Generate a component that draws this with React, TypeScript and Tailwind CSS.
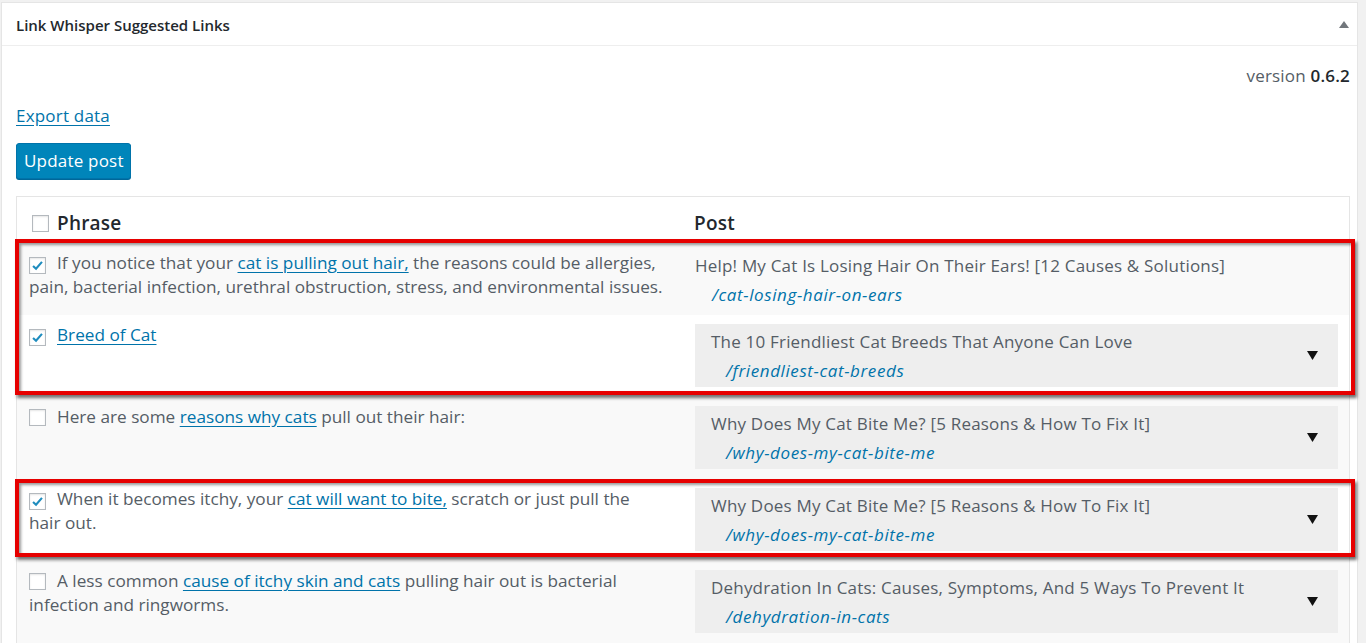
import React from 'react';

type Row = {
  checked: boolean;
  before: string;
  link: string;
  after: string;
  title: string;
  slug: string;
  select: boolean;
  striped: boolean;
};

// "\n" marks where the phrase wraps in the original layout
const rows: Row[] = [
  {
    checked: true,
    before: 'If you notice that your ',
    link: 'cat is pulling out hair,',
    after: ' the reasons could be allergies,\npain, bacterial infection, urethral obstruction, stress, and environmental issues.',
    title: 'Help! My Cat Is Losing Hair On Their Ears! [12 Causes & Solutions]',
    slug: '/cat-losing-hair-on-ears',
    select: false,
    striped: true,
  },
  {
    checked: true,
    before: '',
    link: 'Breed of Cat',
    after: '',
    title: 'The 10 Friendliest Cat Breeds That Anyone Can Love',
    slug: '/friendliest-cat-breeds',
    select: true,
    striped: false,
  },
  {
    checked: false,
    before: 'Here are some ',
    link: 'reasons why cats',
    after: ' pull out their hair:',
    title: 'Why Does My Cat Bite Me? [5 Reasons & How To Fix It]',
    slug: '/why-does-my-cat-bite-me',
    select: true,
    striped: true,
  },
  {
    checked: true,
    before: 'When it becomes itchy, your ',
    link: 'cat will want to bite,',
    after: ' scratch or just pull the\nhair out.',
    title: 'Why Does My Cat Bite Me? [5 Reasons & How To Fix It]',
    slug: '/why-does-my-cat-bite-me',
    select: true,
    striped: false,
  },
  {
    checked: false,
    before: 'A less common ',
    link: 'cause of itchy skin and cats',
    after: ' pulling hair out is bacterial\ninfection and ringworms.',
    title: 'Dehydration In Cats: Causes, Symptoms, And 5 Ways To Prevent It',
    slug: '/dehydration-in-cats',
    select: true,
    striped: true,
  },
];

const Checkbox = ({ checked }: { checked?: boolean }) => (
  <span className="mr-[11px] inline-flex h-[17px] w-[17px] items-center justify-center border border-[#b4b9be] bg-white align-[-3px] shadow-[inset_0_1px_2px_rgba(0,0,0,0.1)]">
    {checked && (
      <svg width="13" height="13" viewBox="0 0 16 16">
        <path d="M2.5 8.5 L6.2 12 L13.5 3.5" fill="none" stroke="#1e8cbe" strokeWidth="2.6" />
      </svg>
    )}
  </span>
);

// red annotation frame drawn over a group of rows
const Highlight = ({ top, bottom }: { top: string; bottom: string }) => (
  <span
    className={`pointer-events-none absolute -left-[2px] -right-[6px] border-4 border-[#e60000] shadow-[2px_3px_3px_rgba(0,0,0,0.55),inset_2px_2px_3px_rgba(0,0,0,0.4)] ${top} ${bottom}`}
  />
);

const PostCell = ({ row }: { row: Row }) => {
  if (!row.select) {
    return (
      <div className="pl-[12px] pr-[11px] pt-[11px] pb-[8px]">
        <div className="leading-6">{row.title}</div>
        <div className="mt-[5px] pl-[17px] italic leading-6 tracking-[0.6px] text-[#0073aa]">{row.slug}</div>
      </div>
    );
  }
  return (
    <div className="pl-[12px] pr-[11px] pt-[9px] pb-[10px]">
      <div className="flex h-[63px] items-center justify-between bg-[#eeeeee] pl-[16px] pr-[20px]">
        <div className="pt-[1px]">
          <div className="leading-6">{row.title}</div>
          <div className="mt-[5px] pl-[15px] italic leading-6 tracking-[0.6px] text-[#0073aa]">{row.slug}</div>
        </div>
        <svg width="11" height="9" viewBox="0 0 11 9">
          <path d="M0 0 H11 L5.5 9 Z" fill="#111" />
        </svg>
      </div>
    </div>
  );
};

const TableRow = ({ row }: { row: Row }) => {
  const parts = row.after.split('\n');
  return (
    <div className={`grid grid-cols-2 ${row.striped ? 'bg-[#f9f9f9]' : 'bg-white'}`}>
      <div className="pl-[12px] pr-[8px] pt-[8px] text-[17.2px] leading-6 tracking-normal">
        <Checkbox checked={row.checked} />
        {row.before}
        <a href="#" className="text-[#0073aa] underline underline-offset-[3px]">
          {row.link}
        </a>
        {parts.map((p, i) => (
          <React.Fragment key={i}>
            {i > 0 && <br />}
            {p}
          </React.Fragment>
        ))}
      </div>
      <PostCell row={row} />
    </div>
  );
};

export default function App() {
  return (
    <div className="min-h-screen bg-[#f1f1f1] pt-[2px] pl-[1px] font-['Open_Sans',sans-serif] text-[17px] tracking-[0.2px] text-[#555d66]">
      <div className="w-[1357px] border border-[#e5e5e5] bg-white">
        <div className="flex h-[43px] items-center justify-between border-b border-[#eeeeee] pl-[14px] pr-[8px] pt-[3px]">
          <h2 className="text-[15px] font-semibold tracking-normal text-[#23282d]">Link Whisper Suggested Links</h2>
          <svg width="10" height="7" viewBox="0 0 10 7" className="-mt-[3px]">
            <path d="M0 7 L5 0 L10 7 Z" fill="#72777c" />
          </svg>
        </div>

        <div className="pl-[14px] pr-[7px]">
          <div className="mt-[18px] text-right leading-6">
            version <span className="font-semibold text-[#23282d]">0.6.2</span>
          </div>

          <div className="mt-[16px] leading-6">
            <a href="#" className="text-[#0073aa] underline underline-offset-[3px]">
              Export data
            </a>
          </div>

          <button className="mt-[15px] h-[36px] w-[115px] rounded-[3px] border border-[#0073aa] bg-[#0085ba] pl-[7px] text-left text-white shadow-[0_1px_0_#006799]">
            Update post
          </button>

          <div className="mt-[17px] border border-[#e5e5e5]">
            <div className="grid h-[46px] grid-cols-2 bg-white pt-[14px] text-[19px] text-[#23282d]">
              <div className="flex h-6 items-center pl-[15px]">
                <span className="mr-[8px] inline-block h-[17px] w-[17px] border border-[#b4b9be] bg-white shadow-[inset_0_1px_2px_rgba(0,0,0,0.1)]" />
                <span className="font-semibold">Phrase</span>
              </div>
              <div className="pl-[11px] font-semibold leading-6">Post</div>
            </div>

            <div className="relative">
              <TableRow row={rows[0]} />
              <TableRow row={rows[1]} />
              <Highlight top="-top-[4px]" bottom="bottom-[2px]" />
            </div>
            <TableRow row={rows[2]} />
            <div className="relative">
              <TableRow row={rows[3]} />
              <Highlight top="top-0" bottom="bottom-[4px]" />
            </div>
            <TableRow row={rows[4]} />
          </div>
        </div>
      </div>
    </div>
  );
}
